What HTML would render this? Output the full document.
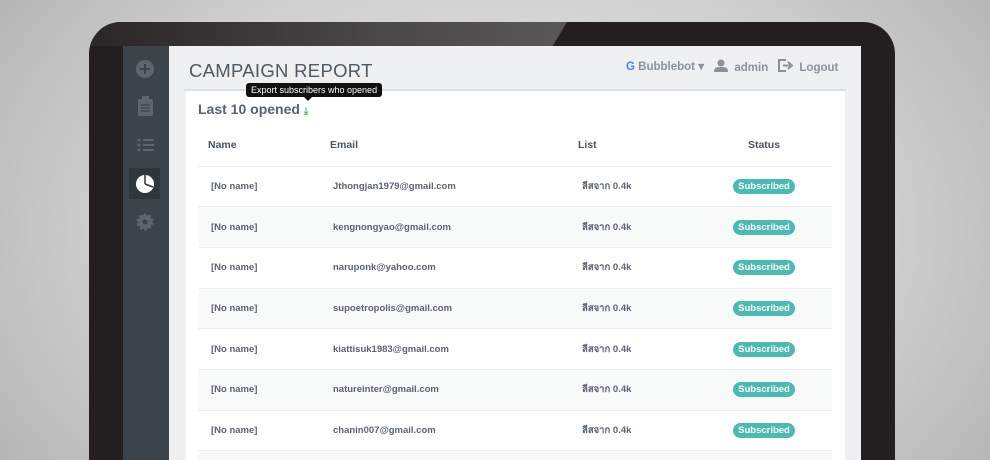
<!DOCTYPE html><html><head><meta charset="utf-8"><style>
*{margin:0;padding:0;box-sizing:border-box}
html,body{width:990px;height:460px;overflow:hidden}
body{position:relative;font-family:"Liberation Sans","Noto Sans CJK SC",sans-serif;background:radial-gradient(ellipse 700px 500px at 500px 230px,#e6e6e6 0%,#cfcfcf 55%,#a9a9a9 100%)}
.bezel{position:absolute;left:89px;top:22px;width:806px;height:438px;background:#231f20;border-radius:32px 32px 0 0;overflow:hidden}
.glare{position:absolute;left:0;top:0;width:478px;height:24px;background:linear-gradient(90deg,#2a2627,#4a4748 60%,#5a5758);clip-path:polygon(0 0,100% 0,97% 100%,0 100%)}
.side{position:absolute;left:123px;top:46px;width:46px;height:414px;background:#3b434b}
.main{position:absolute;left:169px;top:46px;width:692px;height:414px;background:#eef0f2;overflow:hidden}
.title{position:absolute;left:20px;top:14px;font-size:18.5px;color:#4d5866;letter-spacing:.3px}
.hline{position:absolute;left:15px;top:43px;width:662px;height:2px;background:#dde0e3}
.card{position:absolute;left:17px;top:45px;width:659px;height:369px;background:#fff}
.nav{position:absolute;top:13px;font-size:11.5px;font-weight:bold;color:#8a929b}
.tip{position:absolute;left:77px;top:37px;background:#111;color:#fff;font-size:9px;padding:2px 5px;border-radius:3px;white-space:nowrap}
.tip:after{content:"";position:absolute;left:58px;bottom:-4px;border:4px solid transparent;border-bottom:0;border-top-color:#111}
.h2{position:absolute;left:29px;top:55px;font-size:14px;font-weight:bold;color:#586372}
table{position:absolute;left:29px;top:78px;width:634px;border-collapse:collapse;font-size:9.5px;font-weight:bold;color:#5b6470;table-layout:fixed}
th{height:42px;font-size:10.5px;color:#4d5560;text-align:left;border-bottom:1px solid #eceeef}
td{height:40.7px;border-bottom:1px solid #eceeef}
tr:nth-child(odd) td{background:#f8f9f9}
.b{background:#4bbab1;color:#fff;padding:2px 5px;border-radius:8px;font-size:9.5px}
</style></head><body>
<div class="bezel"><div class="glare"></div></div>
<div class="side">
<svg width="46" height="200" style="position:absolute;left:0;top:0">
<circle cx="22" cy="23" r="9" fill="#5d656e"/><path d="M22 18v10M17 23h10" stroke="#3b434b" stroke-width="2"/>
<rect x="15" y="53" width="15" height="17" rx="2" fill="#5d656e"/><rect x="19" y="50" width="7" height="4" fill="#5d656e"/><path d="M18 59h9M18 62h9M18 65h9" stroke="#3b434b" stroke-width="1.2"/>
<g fill="#5d656e"><circle cx="16" cy="94" r="1.5"/><circle cx="16" cy="99" r="1.5"/><circle cx="16" cy="104" r="1.5"/><rect x="20" y="93" width="11" height="2"/><rect x="20" y="98" width="11" height="2"/><rect x="20" y="103" width="11" height="2"/></g>
<rect x="6" y="122" width="31" height="31" rx="2" fill="#2f363d"/>
<circle cx="22" cy="138" r="9" fill="#fff"/><path d="M22 138V129M22 138L30 141" stroke="#2f363d" stroke-width="1.5"/>
<circle cx="22" cy="176" r="7" fill="#5d656e" stroke="#5d656e" stroke-width="3" stroke-dasharray="2.5 2"/><circle cx="22" cy="176" r="2.5" fill="#3b434b"/>
</svg></div>
<div class="main">
<div class="title">CAMPAIGN REPORT</div>
<div class="hline"></div>
<div class="nav" style="left:457px"><span style="color:#4285f4">G</span> Bubblebot ▾</div>
<div class="nav" style="left:545px"><svg width="14" height="13" style="vertical-align:-1px"><circle cx="7" cy="4" r="3.5" fill="#8a929b"/><path d="M0 13c0-5 3-5 7-5s7 0 7 5z" fill="#8a929b"/></svg> &nbsp;admin</div>
<div class="nav" style="left:609px"><svg width="15" height="13" style="vertical-align:-1px"><path d="M8 1H1v11h7" fill="none" stroke="#8a929b" stroke-width="2"/><path d="M5 6.5h7M10 3l4 3.5-4 3.5" fill="none" stroke="#8a929b" stroke-width="2"/></svg> &nbsp;Logout</div>
<div class="card"></div>
<div class="h2">Last 10 opened <span style="color:#5cb85c;font-size:10px">⤓</span></div>
<div class="tip">Export subscribers who opened</div>
<table>
<colgroup><col style="width:132px"><col style="width:248px"><col style="width:118px"><col style="width:136px"></colgroup>
<tr><th style="padding-left:10px">Name</th><th>Email</th><th>List</th><th style="text-align:center">Status</th></tr>
<tr><td style="padding-left:13px">[No name]</td><td style="padding-left:3px">Jthongjan1979@gmail.com</td><td style="padding-left:4px">ลีสจาก 0.4k</td><td style="text-align:center"><span class="b">Subscribed</span></td></tr>
<tr><td style="padding-left:13px">[No name]</td><td style="padding-left:3px">kengnongyao@gmail.com</td><td style="padding-left:4px">ลีสจาก 0.4k</td><td style="text-align:center"><span class="b">Subscribed</span></td></tr>
<tr><td style="padding-left:13px">[No name]</td><td style="padding-left:3px">naruponk@yahoo.com</td><td style="padding-left:4px">ลีสจาก 0.4k</td><td style="text-align:center"><span class="b">Subscribed</span></td></tr>
<tr><td style="padding-left:13px">[No name]</td><td style="padding-left:3px">supoetropolis@gmail.com</td><td style="padding-left:4px">ลีสจาก 0.4k</td><td style="text-align:center"><span class="b">Subscribed</span></td></tr>
<tr><td style="padding-left:13px">[No name]</td><td style="padding-left:3px">kiattisuk1983@gmail.com</td><td style="padding-left:4px">ลีสจาก 0.4k</td><td style="text-align:center"><span class="b">Subscribed</span></td></tr>
<tr><td style="padding-left:13px">[No name]</td><td style="padding-left:3px">natureinter@gmail.com</td><td style="padding-left:4px">ลีสจาก 0.4k</td><td style="text-align:center"><span class="b">Subscribed</span></td></tr>
<tr><td style="padding-left:13px">[No name]</td><td style="padding-left:3px">chanin007@gmail.com</td><td style="padding-left:4px">ลีสจาก 0.4k</td><td style="text-align:center"><span class="b">Subscribed</span></td></tr>
</table>
<div style="position:absolute;left:29px;top:405px;width:634px;height:9px;background:#f8f9f9"></div>
</div>
</body></html>
